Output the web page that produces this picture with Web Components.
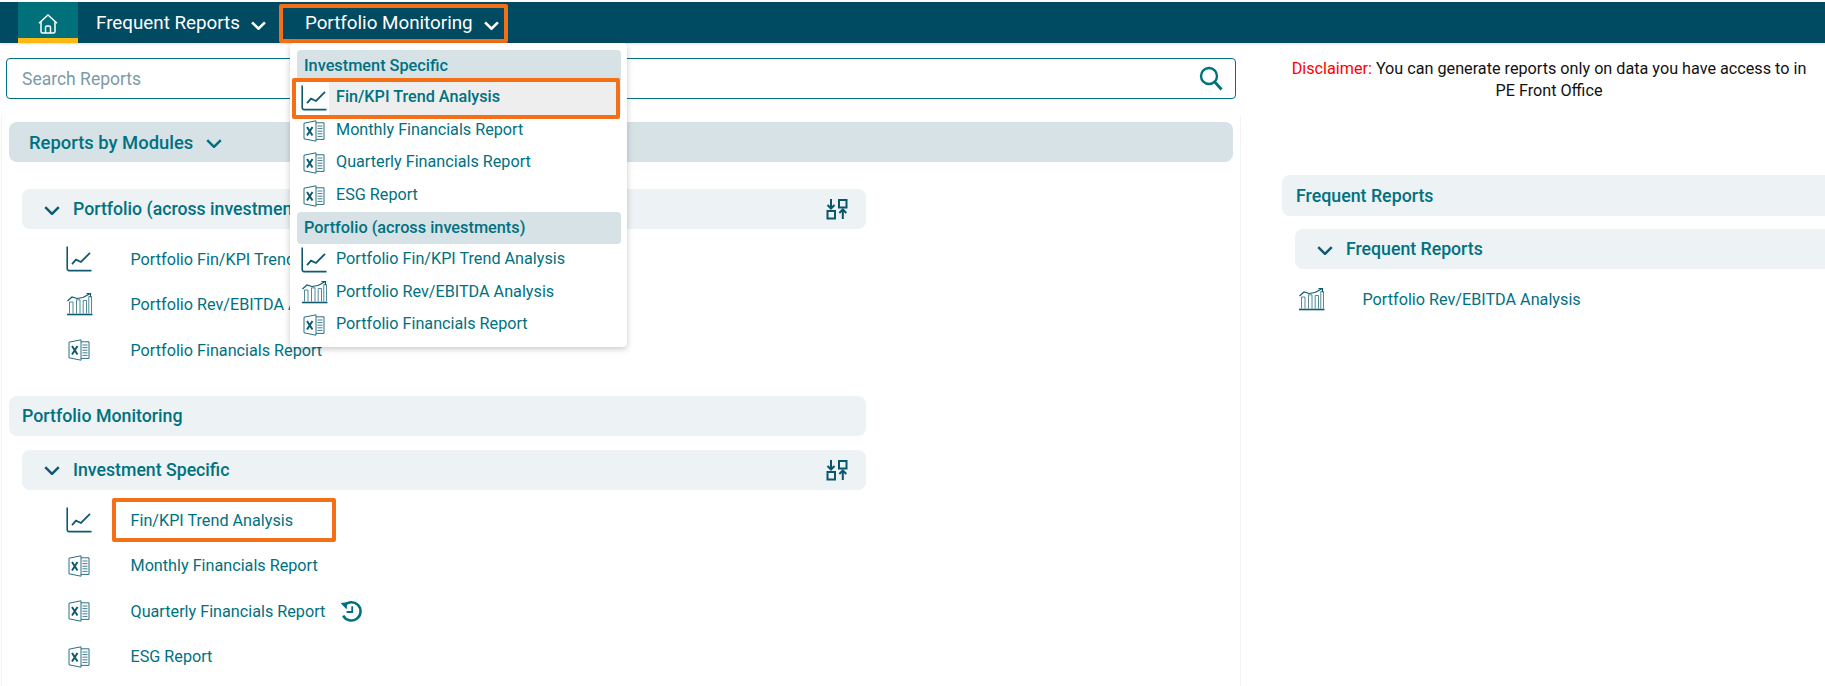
<!DOCTYPE html>
<html lang="en">
<head>
<meta charset="utf-8">
<title>Reports</title>
<style>
    html, body { margin: 0; padding: 0; height: 100%; overflow: hidden; background: #fff; }
    body { font-family: Roboto, "Liberation Sans", sans-serif; font-size: 16px; color: #00717f; }
    .right-indent { --row-indent: 3px; }
    .left-indent { --row-indent: 44px; }
</style>
</head>
<body>
<app-header>
    <nav-item>Frequent Reports</nav-item>
    <nav-item marked>Portfolio Monitoring</nav-item>
    <report-menu slot="menu">
        <menu-head>Investment Specific</menu-head>
        <menu-row icon="trend" marked>Fin/KPI Trend Analysis</menu-row>
        <menu-row icon="excel">Monthly Financials Report</menu-row>
        <menu-row icon="excel">Quarterly Financials Report</menu-row>
        <menu-row icon="excel">ESG Report</menu-row>
        <menu-head>Portfolio (across investments)</menu-head>
        <menu-row icon="trend">Portfolio Fin/KPI Trend Analysis</menu-row>
        <menu-row icon="rev">Portfolio Rev/EBITDA Analysis</menu-row>
        <menu-row icon="excel">Portfolio Financials Report</menu-row>
    </report-menu>
</app-header>
<page-columns>
    <search-box slot="search">Search Reports</search-box>
    <modules-panel slot="modules">
        <section-bar tone="dark" chevron>Reports by Modules</section-bar>
        <report-group class="left-indent" swap style="margin-top:27px">
            <span slot="title">Portfolio (across investments)</span>
            <report-row icon="trend">Portfolio Fin/KPI Trend Analysis</report-row>
            <report-row icon="rev">Portfolio Rev/EBITDA Analysis</report-row>
            <report-row icon="excel">Portfolio Financials Report</report-row>
        </report-group>
        <section-bar style="margin-top:22.9px">Portfolio Monitoring</section-bar>
        <report-group class="left-indent" swap style="margin-top:14px">
            <span slot="title">Investment Specific</span>
            <report-row icon="trend" marked>Fin/KPI Trend Analysis</report-row>
            <report-row icon="excel">Monthly Financials Report</report-row>
            <report-row icon="excel">Quarterly Financials Report<history-icon slot="after"></history-icon></report-row>
            <report-row icon="excel">ESG Report</report-row>
        </report-group>
    </modules-panel>
    <side-panel slot="side">
        <disclaimer-note>You can generate reports only on data you have access to in PE Front Office</disclaimer-note>
        <section-bar style="margin-top:73px;height:41px;margin-right:-20px;padding:0 0 1px 14px">Frequent Reports</section-bar>
        <report-group class="right-indent" style="margin:13px -20px 0 13px">
            <span slot="title">Frequent Reports</span>
            <report-row icon="rev">Portfolio Rev/EBITDA Analysis</report-row>
        </report-group>
    </side-panel>
</page-columns>

<script>
const ICONS = {
    trend: `<svg width="26" height="26" viewBox="0 0 26 26" fill="none" stroke="#0f5a70" stroke-width="1.6">
        <path d="M1.2 .5V22.6q0 2 2 2H25.5"/>
        <path d="M6 18.2 10 13.6 15 16 24 6.8" stroke-width="1.8"/>
    </svg>`,
    rev: `<svg width="27" height="23" viewBox="0 0 27 23" fill="none" stroke="#3d7c8c" stroke-width=".9">
        <path d="M1 21.5H26.5" stroke="#0f5a70" stroke-width="1.6"/>
        <path d="M3.5 20.5V9H7V20.5M10.5 20.5V6.8H14V20.5M17.2 20.5V7.5H20.5V20.5M22.8 20.5V3.5H25.5V20.5"/>
        <path d="M1.5 8 6 4 11 5.5 17 4.5 23.5 1" stroke="#0f5a70" stroke-width="1.2"/>
        <path d="M20.5 .7H24.5V4.2" stroke="#0f5a70" stroke-width="1.2"/>
    </svg>`,
    excel: `<svg width="22" height="22" viewBox="0 0 22 22" fill="none" stroke="#2a6f82" stroke-width="1">
        <path d="M1 3.2 13 .8V21.2L1 18.8Z" fill="#fff"/>
        <path d="M13 2.8H21V19.4H13"/>
        <path d="M14.5 6H19.5M14.5 8.6H19.5M14.5 11.2H19.5M14.5 13.8H19.5M14.5 16.4H19.5" stroke-width=".9"/>
        <path d="M4 7 9.5 15.5M9.5 7 4 15.5" stroke="#0f5a70" stroke-width="2"/>
    </svg>`
};

const CHEVRON = (color, w, h, sw) => `<svg width="${w}" height="${h}" viewBox="0 0 14 8" fill="none" stroke="${color}" stroke-width="${sw}"><path d="M1 1 7 7 13 1"/></svg>`;

class ReportIcon extends HTMLElement {
    constructor() {
        super();
        this.attachShadow({ mode: "open" });
    }

    connectedCallback() {
        this.shadowRoot.innerHTML = `
        <style>
        :host { display: flex; align-items: center; justify-content: center; width: 26px; height: 26px; flex: none; }
        svg { display: block; flex: none; }
        </style>
        ${ICONS[this.getAttribute("type")] || ""}`;
    }
}

class HistoryIcon extends HTMLElement {
    constructor() {
        super();
        this.attachShadow({ mode: "open" });
        this.shadowRoot.innerHTML = `
        <style>
        :host { display: block; width: 23px; height: 23px; margin-left: 15px; }
        svg { display: block; }
        </style>
        <svg width="23" height="23" viewBox="0 0 23 23" fill="none" stroke="#00717f" stroke-width="2.5">
            <path d="M4 5.8A9.2 9.2 0 1 1 3.2 15.6"/>
            <path d="M.6 3 7.4 2.2 6.6 9.4Z" fill="#00717f" stroke="none"/>
            <path d="M12.2 6.2V12H6.6" stroke-width="1.8"/>
        </svg>`;
    }
}

class AppHeader extends HTMLElement {
    constructor() {
        super();
        this.attachShadow({ mode: "open" });
        this.shadowRoot.innerHTML = `
        <style>
        :host {
            display: flex;
            position: relative;
            z-index: 5;
            margin-top: 2px;
            height: 41px;
            padding-left: 18px;
            background: #004a62;
            box-shadow: 0 1px 2px rgba(0,0,0,0.14);
        }
        .home {
            display: flex;
            align-items: center;
            justify-content: center;
            box-sizing: border-box;
            width: 60px;
            margin-right: 18px;
            padding-top: 7px;
            background: #00707a;
            border-bottom: 5px solid #fdb913;
        }
        svg { display: block; }
        </style>
        <div class="home">
            <svg width="20" height="20" viewBox="0 0 20 20" fill="none" stroke="#fff" stroke-width="1.5">
                <path d="M1 9.2 10 1 19 9.2M3 7.5V17.5Q3 19 4.5 19H15.5Q17 19 17 17.5V7.5"/>
                <path d="M7.5 19V13.5Q7.5 12 9 12H11Q12.5 12 12.5 13.5V19"/>
            </svg>
        </div>
        <slot></slot>
        <slot name="menu"></slot>`;
    }
}

class NavItem extends HTMLElement {
    constructor() {
        super();
        this.attachShadow({ mode: "open" });
        this.shadowRoot.innerHTML = `
        <style>
        :host {
            display: flex;
            align-items: center;
            gap: 11px;
            font-size: 18.8px;
            color: #fff;
            margin-right: 13px;
        }
        :host([marked]) {
            box-sizing: border-box;
            margin: 2px 0 0;
            padding: 0 5px 2px 22px;
            border: 4px solid #f46f16;
            border-radius: 2px;
        }
        svg { display: block; margin-top: 5px; }
        </style>
        <slot></slot>
        ${CHEVRON("#fff", 15, 9, 2.4)}`;
    }
}

class ReportMenu extends HTMLElement {
    constructor() {
        super();
        this.attachShadow({ mode: "open" });
        this.shadowRoot.innerHTML = `
        <style>
        :host {
            display: block;
            position: absolute;
            left: 290px;
            top: 41px;
            box-sizing: border-box;
            width: 337px;
            height: 304px;
            padding: 7px 6px 0 7px;
            background: #fff;
            border-radius: 4px;
            box-shadow: 0 2px 6px rgba(0,0,0,0.22);
        }
        </style>
        <slot></slot>`;
    }
}

class MenuHead extends HTMLElement {
    constructor() {
        super();
        this.attachShadow({ mode: "open" });
        this.shadowRoot.innerHTML = `
        <style>
        :host {
            display: flex;
            align-items: center;
            height: 32px;
            padding: 0 0 1px 7px;
            box-sizing: border-box;
            background: #d7e2e7;
            border-radius: 4px;
            font-size: 16.3px;
            font-weight: 500;
            color: #00717f;
        }
        </style>
        <slot></slot>`;
    }
}

class MenuRow extends HTMLElement {
    constructor() {
        super();
        this.attachShadow({ mode: "open" });
    }

    connectedCallback() {
        this.shadowRoot.innerHTML = `
        <style>
        :host {
            display: flex;
            align-items: center;
            position: relative;
            height: 32.5px;
            font-size: 16.2px;
            color: #00717f;
        }
        report-icon { margin-left: 4px; }
        .label { display: flex; align-items: center; flex: 1; align-self: stretch; margin-left: 2px; padding: 0 0 3px 7px; }
        :host([marked]) .label { font-weight: 500; background: #eeeeee; }
        :host([marked]) .frame {
            position: absolute;
            inset: -4px 1px -4.5px -5px;
            border: 4px solid #f46f16;
            border-radius: 2px;
        }
        </style>
        <report-icon type="${this.getAttribute("icon")}"></report-icon>
        <div class="label"><slot></slot></div>
        <div class="frame"></div>`;
    }
}

class PageColumns extends HTMLElement {
    constructor() {
        super();
        this.attachShadow({ mode: "open" });
        this.shadowRoot.innerHTML = `
        <style>
        :host { display: grid; grid-template-columns: 1241px 1fr; }
        .left { padding-top: 15px; }
        .right { padding: 15px 0 0 41px; min-width: 0; }
        </style>
        <div class="left">
            <slot name="search"></slot>
            <slot name="modules"></slot>
        </div>
        <div class="right"><slot name="side"></slot></div>`;
    }
}

class SearchBox extends HTMLElement {
    constructor() {
        super();
        this.attachShadow({ mode: "open" });
        this.shadowRoot.innerHTML = `
        <style>
        :host {
            display: flex;
            align-items: center;
            justify-content: space-between;
            box-sizing: border-box;
            height: 41px;
            margin: 0 5px 0 6px;
            padding: 0 12px 0 15px;
            border: 1px solid #00717f;
            border-radius: 4px;
            font-size: 17.5px;
            color: #7d9aa5;
        }
        svg { display: block; }
        </style>
        <slot></slot>
        <svg width="24" height="25" viewBox="0 0 24 25" fill="none" stroke="#00717f" stroke-width="2.4">
            <circle cx="10" cy="10" r="8"/>
            <path d="M15.8 16 22.5 23.5" stroke-width="2.8"/>
        </svg>`;
    }
}

class ModulesPanel extends HTMLElement {
    constructor() {
        super();
        this.attachShadow({ mode: "open" });
        this.shadowRoot.innerHTML = `
        <style>
        :host {
            display: block;
            box-sizing: border-box;
            height: 600px;
            margin: 16px 0 0 1px;
            padding: 7px 7px 0 7px;
            border-left: 1px solid #f1f3f4;
            border-right: 1px solid #f1f3f4;
        }
        ::slotted(report-group) { width: 844px; }
        ::slotted(section-bar:not(:first-child)) { width: 857px; }
        </style>
        <slot></slot>`;
    }
}

class SectionBar extends HTMLElement {
    constructor() {
        super();
        this.attachShadow({ mode: "open" });
    }

    connectedCallback() {
        this.shadowRoot.innerHTML = `
        <style>
        :host {
            display: flex;
            align-items: center;
            gap: 13px;
            box-sizing: border-box;
            height: 40px;
            padding-left: 13px;
            background: #edf2f5;
            border-radius: 8px;
            font-size: 17.8px;
            font-weight: 500;
            color: #00717f;
        }
        :host([tone="dark"]) { background: #d7e2e7; padding: 1px 0 0 20px; font-size: 18.4px; }
        svg { display: block; margin-top: 2px; }
        </style>
        <slot></slot>
        ${this.hasAttribute("chevron") ? CHEVRON("#00717f", 16, 9, 2.2) : ""}`;
    }
}

class ReportGroup extends HTMLElement {
    constructor() {
        super();
        this.attachShadow({ mode: "open" });
    }

    connectedCallback() {
        this.shadowRoot.innerHTML = `
        <style>
        :host { display: block; margin-left: 13px; }
        .head {
            display: flex;
            align-items: center;
            box-sizing: border-box;
            height: 40px;
            padding: 0 18px 0 22px;
            background: #edf2f5;
            border-radius: 8px;
            font-size: 17.7px;
            font-weight: 500;
            color: #00717f;
        }
        .head svg.chev { margin: 2px 13px 0 0; display: block; }
        .title { flex: 1; }
        .rows { padding-top: 7.6px; }
        </style>
        <div class="head">
            <svg class="chev" width="16" height="9" viewBox="0 0 14 8" fill="none" stroke="#0f5a70" stroke-width="2.2"><path d="M1 1 7 7 13 1"/></svg>
            <div class="title"><slot name="title"></slot></div>
            ${this.hasAttribute("swap") ? `<svg width="22" height="22" viewBox="0 0 22 22" fill="none" stroke="#0a566c" stroke-width="2">
                <path d="M5 1V10M1.5 7 5 10.5 8.5 7"/>
                <rect x="13" y="2" width="7.5" height="7.5"/>
                <rect x="1.5" y="13" width="7.5" height="7.5"/>
                <path d="M16.8 21V12M13.3 15 16.8 11.5 20.3 15"/>
            </svg>` : ""}
        </div>
        <div class="rows"><slot></slot></div>`;
    }
}

class ReportRow extends HTMLElement {
    constructor() {
        super();
        this.attachShadow({ mode: "open" });
    }

    connectedCallback() {
        this.shadowRoot.innerHTML = `
        <style>
        :host {
            display: flex;
            align-items: center;
            height: 45.5px;
            padding-left: var(--row-indent, 0);
            font-size: 16.2px;
            color: #00717f;
        }
        .link {
            display: flex;
            align-items: center;
            box-sizing: border-box;
            height: 44px;
            margin-left: 20px;
            padding: 0 39px 0 14.5px;
            border: 4px solid transparent;
            border-radius: 2px;
        }
        :host([marked]) .link { border-color: #f46f16; }
        .after { display: flex; margin-left: -43px; }
        </style>
        <report-icon type="${this.getAttribute("icon")}"></report-icon>
        <div class="link"><slot></slot></div>
        <div class="after"><slot name="after"></slot></div>`;
    }
}

class SidePanel extends HTMLElement {
    constructor() {
        super();
        this.attachShadow({ mode: "open" });
        this.shadowRoot.innerHTML = `
        <style>
        :host { display: block; }
        </style>
        <slot></slot>`;
    }
}

class DisclaimerNote extends HTMLElement {
    constructor() {
        super();
        this.attachShadow({ mode: "open" });
        this.shadowRoot.innerHTML = `
        <style>
        :host {
            display: block;
            width: 530px;
            margin-left: 2px;
            font-size: 16.2px;
            line-height: 22px;
            text-align: center;
            color: #111;
        }
        .label { color: #f00; }
        </style>
        <span class="label">Disclaimer:</span> <slot></slot>`;
    }
}

customElements.define("report-icon", ReportIcon);
customElements.define("history-icon", HistoryIcon);
customElements.define("app-header", AppHeader);
customElements.define("nav-item", NavItem);
customElements.define("report-menu", ReportMenu);
customElements.define("menu-head", MenuHead);
customElements.define("menu-row", MenuRow);
customElements.define("page-columns", PageColumns);
customElements.define("search-box", SearchBox);
customElements.define("modules-panel", ModulesPanel);
customElements.define("section-bar", SectionBar);
customElements.define("report-group", ReportGroup);
customElements.define("report-row", ReportRow);
customElements.define("side-panel", SidePanel);
customElements.define("disclaimer-note", DisclaimerNote);
</script>
</body>
</html>
